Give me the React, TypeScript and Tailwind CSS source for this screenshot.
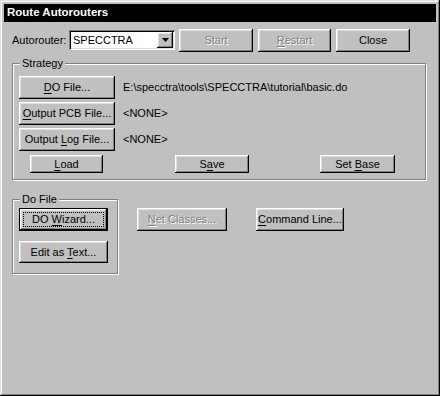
import React from "react";

const raised =
  "shadow-[inset_-1px_-1px_#000,inset_1px_1px_#fff,inset_-2px_-2px_#808080,inset_2px_2px_#dfdfdf]";

function Btn({
  w,
  h = "h-[23px]",
  disabled = false,
  isDefault = false,
  className = "",
  children,
}: {
  w: string;
  h?: string;
  disabled?: boolean;
  isDefault?: boolean;
  className?: string;
  children: React.ReactNode;
}) {
  const label = (
    <span
      className={
        disabled
          ? "text-[#808080] [text-shadow:1px_1px_0_#fff]"
          : "text-black"
      }
    >
      {children}
    </span>
  );
  if (isDefault) {
    return (
      <div className={`${w} ${h} border border-black shrink-0 ${className}`}>
        <div
          className={`relative w-full h-full bg-[#c0c0c0] ${raised} flex items-center justify-center`}
        >
          {label}
          <div className="absolute inset-[3px] border border-dotted border-black" />
        </div>
      </div>
    );
  }
  return (
    <div
      className={`${w} ${h} shrink-0 bg-[#c0c0c0] ${raised} flex items-center justify-center ${className}`}
    >
      {label}
    </div>
  );
}

function U({ children }: { children: React.ReactNode }) {
  return <span className="underline underline-offset-[2px]">{children}</span>;
}

function Group({
  title,
  className,
  children,
}: {
  title: string;
  className: string;
  children: React.ReactNode;
}) {
  return (
    <div
      className={`relative border border-[#808080] shadow-[inset_1px_1px_#fff,1px_1px_#fff] ${className}`}
    >
      <div className="absolute left-[7px] top-[-8px] bg-[#c0c0c0] px-[2px] leading-[14px]">
        {title}
      </div>
      {children}
    </div>
  );
}

export default function App() {
  return (
    <div className="w-[440px] h-[396px] bg-[#c0c0c0] p-[4px] flex flex-col text-[11px] text-black font-['Liberation_Sans',Arial,sans-serif] shadow-[inset_-1px_-1px_#000,inset_1px_1px_#dfdfdf,inset_-2px_-2px_#808080,inset_2px_2px_#fff]">
      {/* Title bar */}
      <div className="h-[18px] bg-black text-white font-bold text-[11.5px] pl-[3px] flex items-center shrink-0">
        Route Autorouters
      </div>

      {/* Top row */}
      <div className="mt-[7px] pl-[8px] flex items-start">
        <div className="w-[57px] h-[20px] mt-[1px] flex items-center">
          Autorouter:
        </div>
        <div className="w-[106px] h-[20px] mt-[1px] bg-white shadow-[inset_1px_1px_#808080,inset_-1px_-1px_#fff,inset_2px_2px_#000,inset_-2px_-2px_#dfdfdf] p-[2px] flex items-stretch">
          <div className="flex-1 flex items-center pl-[2px]">SPECCTRA</div>
          <div
            className={`w-[16px] bg-[#c0c0c0] ${raised} flex items-center justify-center`}
          >
            <svg width="7" height="4" viewBox="0 0 7 4">
              <path d="M0 0H7L3.5 4Z" fill="#000" />
            </svg>
          </div>
        </div>
        <Btn w="w-[74px]" disabled className="ml-[4px]">
          Start
        </Btn>
        <Btn w="w-[73px]" disabled className="ml-[5px]">
          <U>R</U>estart
        </Btn>
        <Btn w="w-[74px]" className="ml-[5px]">
          Close
        </Btn>
      </div>

      {/* Strategy */}
      <Group
        title="Strategy"
        className="mt-[11px] ml-[8px] w-[414px] h-[117px] pt-[12px] pl-[6px]"
      >
        <div className="flex items-center">
          <Btn w="w-[96px]">
            <U>D</U>O File...
          </Btn>
          <span className="ml-[8px]">
            E:\specctra\tools\SPECCTRA\tutorial\basic.do
          </span>
        </div>
        <div className="flex items-center mt-[3px]">
          <Btn w="w-[96px]">
            <U>O</U>utput PCB File...
          </Btn>
          <span className="ml-[8px]">&lt;NONE&gt;</span>
        </div>
        <div className="flex items-center mt-[3px]">
          <Btn w="w-[96px]">
            Output <U>L</U>og File...
          </Btn>
          <span className="ml-[8px]">&lt;NONE&gt;</span>
        </div>
        <div className="flex items-center mt-[4px]">
          <Btn w="w-[73px]" h="h-[18px]" className="ml-[11px]">
            <U>L</U>oad
          </Btn>
          <Btn w="w-[74px]" h="h-[18px]" className="ml-[72px]">
            S<U>a</U>ve
          </Btn>
          <Btn w="w-[75px]" h="h-[18px]" className="ml-[71px]">
            Set <U>B</U>ase
          </Btn>
        </div>
      </Group>

      {/* Do File row */}
      <div className="mt-[19px] ml-[8px] flex items-start">
        <Group title="Do File" className="w-[106px] h-[75px] pt-[8px] pl-[6px]">
          <Btn w="w-[89px]" isDefault>
            DO <U>W</U>izard...
          </Btn>
          <Btn w="w-[89px]" h="h-[22px]" className="mt-[10px]">
            Edit as <U>T</U>ext...
          </Btn>
        </Group>
        <Btn w="w-[90px]" disabled className="ml-[19px] mt-[9px]">
          <U>N</U>et Classes...
        </Btn>
        <Btn w="w-[88px]" className="ml-[29px] mt-[9px]">
          <U>C</U>ommand Line...
        </Btn>
      </div>
    </div>
  );
}
